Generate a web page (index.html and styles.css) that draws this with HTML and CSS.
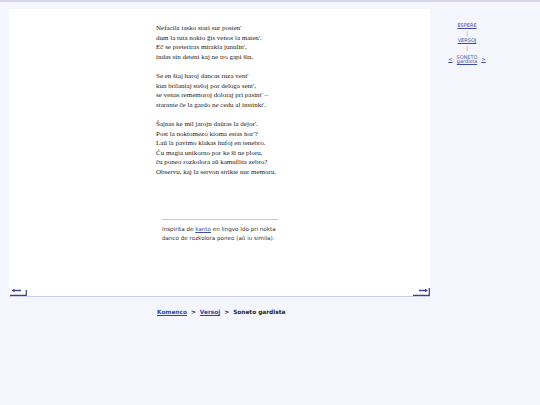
FILE: index.html
```html
<!DOCTYPE html>
<html>
<head>
<meta charset="utf-8">
<link rel="stylesheet" href="styles.css">
</head>
<body>
<div class="layout">
  <div class="panel">
    <div class="content">
      <div class="poem">
        <p>Nefacila tasko stari sur posten'<br>dum la tuta nokto ĝis venos la maten'.<br>Eĉ se preteriras mirakla junulin',<br>indas sin deteni kaj ne tro gapi ŝin.</p>
        <p>Se en ŝiaj haroj dancas ruza vent'<br>kun brilantaj steloj por deloga sent',<br>se venas rememoroj doloraj pri pasint' –<br>starante ĉe la gardo ne cedu al instinkt'.</p>
        <p>Ŝajnas ke mil jarojn daŭras la dejor'.<br>Post la noktomezo kioma estas hor'?<br>Laŭ la pavimo klakas hufoj en tenebro.<br>Ĉu magia unikorno por ke ŝi ne ploru,<br>ĉu poneo rozkolora aŭ kamuflita zebro?<br>Observu, kaj la servon strikte nur memoru.</p>
      </div>
      <div class="note">
        <hr class="rule">
        <p>Inspirita de <a href="#">kanto</a> en lingvo Ido pri nokta<br>danco de rozkolora poneo (aŭ iu simila).</p>
      </div>
    </div>
    <div class="pager">
      <svg class="arrow" width="17" height="9" viewBox="0 0 17 9"><path d="M3 3.5H11" stroke="#3b3f8e" stroke-width="1.4" fill="none"/><path d="M1.5 3.5L4.5 1.8V5.2Z" fill="#3b3f8e"/><path d="M0 8.3H16.3V3" stroke="#3b3f8e" stroke-width="1.2" fill="none"/></svg>
      <svg class="arrow" width="17" height="9" viewBox="0 0 17 9"><path d="M6 3.5H13" stroke="#3b3f8e" stroke-width="1.4" fill="none"/><path d="M15 3.5L12 1.8V5.2Z" fill="#3b3f8e"/><path d="M0 8.3H16.3V1" stroke="#3b3f8e" stroke-width="1.2" fill="none"/></svg>
    </div>
  </div>
  <nav class="side">
    <a href="#">ESPERE</a>
    <span class="bar">|</span>
    <a href="#">VERSOJ</a>
    <span class="bar">|</span>
    <div class="cur">
      <a href="#" class="step">&lt;</a>
      <span class="name">SONETO<br><a href="#">gardista</a></span>
      <a href="#" class="step">&gt;</a>
    </div>
  </nav>
</div>
<div class="crumbs"><a href="#">Komenco</a>&nbsp; &gt; &nbsp;<a href="#">Versoj</a>&nbsp; &gt; &nbsp;Soneto gardista</div>
</body>
</html>
```
FILE: styles.css
```css
html, body {
  margin: 0;
  padding: 0;
}
body {
  background: #f5f6fd;
  border-top: 2px solid #d3d6ee;
  min-height: 403px;
}
.layout {
  display: flex;
  align-items: flex-start;
  padding-top: 7px;
}
.panel {
  margin-left: 9px;
  width: 421px;
  height: 287px;
  background: #ffffff;
  border-bottom: 1px solid #c9cde6;
  display: flex;
  flex-direction: column;
  justify-content: space-between;
}
.content {
  padding: 15px 0 0 147px;
}
.poem {
  font-family: "Liberation Serif", serif;
  font-size: 7px;
  line-height: 9.6px;
  color: #1a1a1a;
}
.poem p {
  margin: 0 0 9.6px 0;
}
.note {
  margin: 41px 0 0 6px;
  width: 116px;
  font-family: "DejaVu Sans", sans-serif;
  font-size: 5.6px;
  line-height: 9px;
  color: #333;
  white-space: nowrap;
}
.rule {
  margin: 0 0 5px 0;
  border: 0;
  border-top: 1px solid #c8c8c8;
  height: 0;
}
.note p {
  margin: 0;
}
.note a {
  color: #3a4fb0;
}
.pager {
  display: flex;
  justify-content: space-between;
  padding: 0 0 0 1px;
  height: 9px;
}
.arrow {
  display: block;
}
.side {
  margin-left: 10px;
  width: 54px;
  padding-top: 14px;
  display: flex;
  flex-direction: column;
  align-items: center;
  font-family: "DejaVu Sans", sans-serif;
  font-size: 5px;
  line-height: 5px;
  color: #4a55a8;
}
.side a {
  color: #3a4aa8;
}
.bar {
  display: block;
  margin: 2.8px 0 2.6px;
  color: #6670b5;
}
.cur {
  display: flex;
  align-items: center;
  gap: 4px;
  margin-top: 1px;
}
.name {
  text-align: center;
  color: #5a64b0;
  line-height: 4.6px;
}
.crumbs {
  margin: 12px 0 0 157px;
  font-family: "DejaVu Sans", sans-serif;
  font-weight: bold;
  font-size: 5.8px;
  color: #222;
}
.crumbs a {
  color: #2d45a8;
}
```
